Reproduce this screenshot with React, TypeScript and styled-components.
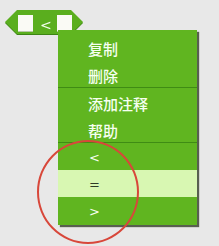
import React from "react";
import styled, { createGlobalStyle } from "styled-components";

const Global = createGlobalStyle`
  html, body { margin: 0; padding: 0; }
  body {
    background: #e8e8e8;
    width: 219px;
    height: 246px;
    overflow: hidden;
    font-family: "Noto Sans CJK SC", "Noto Sans", sans-serif;
  }
`;

const Stage = styled.div`
  position: relative;
  width: 219px;
  height: 246px;
  padding: 10px 0 0 5px;
  box-sizing: border-box;
`;

const BlockWrap = styled.div`
  width: 78px;
  height: 24px;
  filter: drop-shadow(0 1px 0 #3c8513);
`;

const Block = styled.div`
  width: 78px;
  height: 24px;
  box-sizing: border-box;
  background: #5aae1e;
  clip-path: polygon(0 12px, 12px 0, 66px 0, 78px 12px, 66px 24px, 12px 24px);
  display: flex;
  align-items: flex-start;
  padding: 5px 0 0 13px;
  gap: 7px;
`;

const Slot = styled.div`
  width: 15px;
  height: 17px;
  background: #fafaf5;
  box-shadow: inset 0 -1px 0 #b8c8a8;
`;

const Op = styled.span`
  font-family: "DejaVu Sans", sans-serif;
  font-size: 14px;
  line-height: 14px;
  margin-top: 3px;
  width: 10px;
  color: #f4fff0;
  text-align: center;
`;

const Menu = styled.div`
  position: absolute;
  left: 58px;
  top: 30px;
  width: 139px;
  background: #60b520;
  padding: 3px 0 1px;
  box-shadow: 2px 2px 1px rgba(40, 50, 30, 0.75);
`;

const Item = styled.div<{ $active?: boolean; $symbol?: boolean }>`
  height: 27px;
  box-sizing: border-box;
  padding: ${(p) => (p.$symbol ? "2px 0 0 31px" : "3px 0 0 30px")};
  display: flex;
  align-items: center;
  font-size: ${(p) => (p.$symbol ? "13px" : "15px")};
  font-weight: ${(p) => (p.$symbol ? 400 : 500)};
  font-family: ${(p) =>
    p.$symbol ? '"DejaVu Sans", sans-serif' : '"Noto Sans CJK SC", sans-serif'};
  color: ${(p) => (p.$active ? "#2e3a26" : "#f6fff0")};
  background: ${(p) => (p.$active ? "#d8f7b2" : "transparent")};
`;

const Sep = styled.div`
  height: 1px;
  background: #3f8c14;
`;

const Circle = styled.div`
  position: absolute;
  left: 37px;
  top: 140px;
  width: 102px;
  height: 104px;
  border: 2px solid #d8473a;
  border-radius: 50%;
  box-sizing: border-box;
  pointer-events: none;
`;

export default function App() {
  return (
    <>
      <Global />
      <Stage>
        <BlockWrap>
          <Block>
            <Slot />
            <Op>&lt;</Op>
            <Slot />
          </Block>
        </BlockWrap>
        <Menu>
          <Item>复制</Item>
          <Item>删除</Item>
          <Sep />
          <Item>添加注释</Item>
          <Item>帮助</Item>
          <Sep />
          <Item $symbol>&lt;</Item>
          <Item $symbol $active>=</Item>
          <Item $symbol>&gt;</Item>
        </Menu>
        <Circle />
      </Stage>
    </>
  );
}
